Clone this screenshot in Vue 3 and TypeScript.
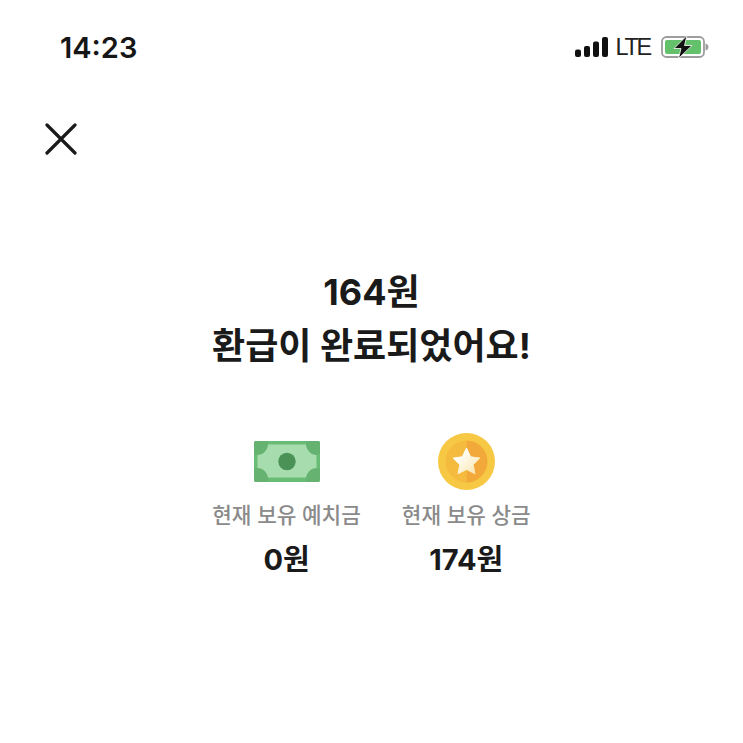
<script setup lang="ts">
const stats = [
  { key: 'cash', label: '현재 보유 예치금', value: '0원' },
  { key: 'coin', label: '현재 보유 상금', value: '174원' },
]
</script>

<template>
  <main class="page">
    <header class="status">
      <span class="time">14:23</span>
      <div class="indicators">
        <svg class="signal" width="33" height="22" viewBox="0 0 33 22">
          <rect x="0" y="13.500" width="6" height="7.500" rx="2" fill="#111" />
          <rect x="9" y="10" width="6" height="11" rx="2" fill="#111" />
          <rect x="18" y="5.500" width="6" height="15.500" rx="2" fill="#111" />
          <rect x="27" y="1" width="6" height="20" rx="2" fill="#111" />
        </svg>
        <span class="lte">LTE</span>
        <svg class="battery" width="48" height="24" viewBox="0 0 48 24">
          <rect x="1" y="2" width="42" height="20" rx="4.500" fill="#fff" stroke="#9d9d9d" stroke-width="1.800" />
          <rect x="4" y="5" width="36" height="14" rx="2" fill="#62c16a" />
          <path d="M44.500 8.500c2 .5 3 2 3 3.500s-1 3-3 3.500z" fill="#9d9d9d" />
          <path d="M26 0.500 13 13.500h7L17.500 23.500 31 10.500h-7.500z" fill="#111" stroke="#fff" stroke-width="0.800" />
        </svg>
      </div>
    </header>

    <nav class="nav">
      <svg width="32" height="32" viewBox="0 0 32 32">
        <path d="M2 2 30 30M30 2 2 30" stroke="#1a1a1a" stroke-width="3.200" stroke-linecap="round" fill="none" />
      </svg>
    </nav>

    <h1 class="title">
      <span>164원</span>
      <span>환급이 완료되었어요!</span>
    </h1>

    <section class="stats">
      <div v-for="s in stats" :key="s.key" class="stat">
        <div class="icon">
          <svg v-if="s.key === 'cash'" width="66" height="41" viewBox="0 0 66 41">
            <defs>
              <clipPath id="note">
                <rect width="66" height="41" rx="2" />
              </clipPath>
            </defs>
            <rect width="66" height="41" rx="2" fill="#68bc75" />
            <rect x="3.500" y="3.500" width="59" height="33" fill="#a7dcae" />
            <g clip-path="url(#note)" fill="#65b271">
              <circle cx="3" cy="3" r="11" />
              <circle cx="63" cy="3" r="11" />
              <circle cx="3" cy="38" r="11" />
              <circle cx="63" cy="38" r="11" />
            </g>
            <circle cx="33" cy="20.500" r="8.700" fill="#4b9257" />
          </svg>
          <svg v-else width="57" height="57" viewBox="0 0 57 57">
            <defs>
              <linearGradient id="star" x1="0" y1="0" x2="1" y2="1">
                <stop offset="0.3" stop-color="#fffdf5" />
                <stop offset="1" stop-color="#fbe3a6" />
              </linearGradient>
            </defs>
            <circle cx="28.500" cy="28.500" r="28.500" fill="#f6c843" />
            <path d="M28.500 7.500a21 21 0 0 0 0 42z" fill="#f5bb3e" />
            <path d="M28.500 7.500a21 21 0 0 1 0 42z" fill="#f2a93a" />
            <path d="M28.500 15 32.600 23.800 41.800 25.100 35.200 31.700 36.900 40.800 28.500 36.400 20.100 40.800 21.800 31.700 15.200 25.100 24.400 23.800Z" fill="url(#star)" stroke="url(#star)" stroke-width="1" stroke-linejoin="round" />
          </svg>
        </div>
        <p class="label">{{ s.label }}</p>
        <p class="value">{{ s.value }}</p>
      </div>
    </section>
  </main>
</template>

<style>
html, body {
  margin: 0;
  background: #fff;
}
</style>

<style scoped>
.page {
  width: 743px;
  height: 743px;
  overflow: hidden;
  display: flex;
  flex-direction: column;
  background: #fff;
  color: #1a1a1a;
  font-family: Inter, "Noto Sans CJK KR", sans-serif;
}
.status {
  display: flex;
  align-items: center;
  justify-content: space-between;
  height: 32px;
  margin-top: 31px;
  padding: 0 34px 0 60px;
}
.time {
  font-size: 29px;
  font-weight: 600;
  color: #161616;
}
.indicators {
  display: flex;
  align-items: center;
  gap: 8px;
}
.lte {
  display: inline-block;
  font-family: "Liberation Sans", sans-serif;
  font-size: 23.500px;
  letter-spacing: -2.300px;
  color: #222;
  margin-right: 3px;
}
.nav {
  display: flex;
  padding: 60px 0 0 45px;
}
.title {
  display: flex;
  flex-direction: column;
  align-items: center;
  margin: 110px 0 0;
  font-size: 36px;
  line-height: 54px;
  font-weight: 700;
  color: #1a1a1a;
}
.stats {
  display: flex;
  justify-content: center;
  gap: 41px;
  margin-top: 59px;
}
.stat {
  display: flex;
  flex-direction: column;
  align-items: center;
}
.icon {
  height: 58px;
  display: flex;
  align-items: center;
  justify-content: center;
}
.label {
  margin: 10px 0 0;
  font-size: 21.300px;
  line-height: 30px;
  font-weight: 500;
  color: #8a8a8a;
  white-space: nowrap;
}
.value {
  margin: 12px 0 0;
  font-size: 29px;
  line-height: 36px;
  font-weight: 700;
  color: #1a1a1a;
}
</style>
